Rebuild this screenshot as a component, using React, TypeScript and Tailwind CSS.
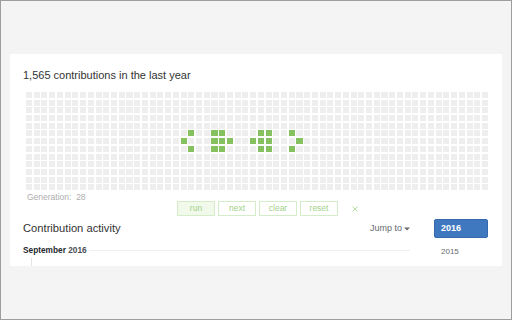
import React from "react";

const ROWS = 13;
const COLS = 60;
const GREEN: Record<number, number[]> = {
  5: [21, 24, 25, 30, 31, 34],
  6: [20, 24, 25, 26, 29, 30, 31, 35],
  7: [21, 24, 25, 30, 31, 34],
};

function Grid() {
  const cells: React.ReactNode[] = [];
  for (let r = 0; r < ROWS; r++) {
    for (let c = 0; c < COLS; c++) {
      const on = (GREEN[r] || []).includes(c);
      cells.push(
        <div
          key={`${r}-${c}`}
          className={on ? "h-[6px] bg-[#85c25f]" : "h-[6px] bg-[#eeeeee]"}
        />
      );
    }
  }
  return (
    <div className="grid w-[462px] grid-cols-[repeat(60,1fr)] gap-x-[1.7px] gap-y-[1.7px]">
      {cells}
    </div>
  );
}

function Btn({ label, active }: { label: string; active?: boolean }) {
  return (
    <div
      className={
        "flex h-[15px] w-[38px] items-center justify-center border border-[#d5ecc8] text-[8.5px] text-[#a3d18b] " +
        (active ? "bg-[#f0f9ea]" : "bg-white")
      }
    >
      {label}
    </div>
  );
}

export default function App() {
  return (
    <div
      className="h-[320px] w-[512px] border border-[#9e9e9e] bg-[#f4f4f4] pl-[9px] pt-[53px]"
      style={{ fontFamily: '"Liberation Sans", Arial, sans-serif' }}
    >
      <div className="flex h-[212px] w-[492px] flex-col overflow-hidden bg-white">
        <div className="pl-[13px] pt-[15px] text-[11px] leading-[13px] text-[#333333]">
          1,565 contributions in the last year
        </div>
        <div className="mt-[10px] pl-[16px]">
          <Grid />
        </div>
        <div className="mt-[2px] h-[11px] pl-[17px] text-[8.5px] leading-[11px] text-[#adadad]">
          Generation:&nbsp; 28
        </div>
        <div className="-mt-[2px] flex items-center gap-[3px] pl-[167px]">
          <Btn label="run" active />
          <Btn label="next" />
          <Btn label="clear" />
          <Btn label="reset" />
          <svg className="ml-[11px]" width="6" height="6" viewBox="0 0 6 6">
            <path d="M0.5 0.5 L5.5 5.5 M5.5 0.5 L0.5 5.5" stroke="#b0db98" strokeWidth="0.9" />
          </svg>
        </div>
        <div className="mt-[3px] flex pl-[13px] pr-[14px]">
          <div className="flex flex-1 flex-col">
            <div className="flex h-[19px] items-center justify-between">
              <div className="text-[11.2px] text-[#333333]">Contribution activity</div>
              <div className="flex items-center gap-[2px] text-[9px] text-[#666a6e]">
                <span>Jump to</span>
                <svg width="6" height="4" viewBox="0 0 6 4">
                  <path d="M0 0.5 L6 0.5 L3 3.5 Z" fill="#666a6e" />
                </svg>
              </div>
            </div>
            <div className="mt-[7px] flex h-[10px] items-center">
              <div className="text-[8.3px] font-bold leading-[10px] text-[#24292e]">
                September <span className="text-[#4a4f55]">2016</span>
              </div>
              <div className="ml-[2px] h-px flex-1 bg-[#eeeeee]" />
            </div>
            <div className="ml-[8px] mt-[3px] h-[12px] w-px bg-[#e4e4e4]" />
          </div>
          <div className="ml-[24px] flex w-[54px] flex-col">
            <div className="flex h-[19px] items-center rounded-[2px] border border-[#3569ad] bg-[#4078c0] pl-[6px] text-[9px] font-bold text-white">
              2016
            </div>
            <div className="mt-[9px] pl-[7px] text-[8px] leading-[10px] text-[#666a6e]">2015</div>
          </div>
        </div>
      </div>
    </div>
  );
}
